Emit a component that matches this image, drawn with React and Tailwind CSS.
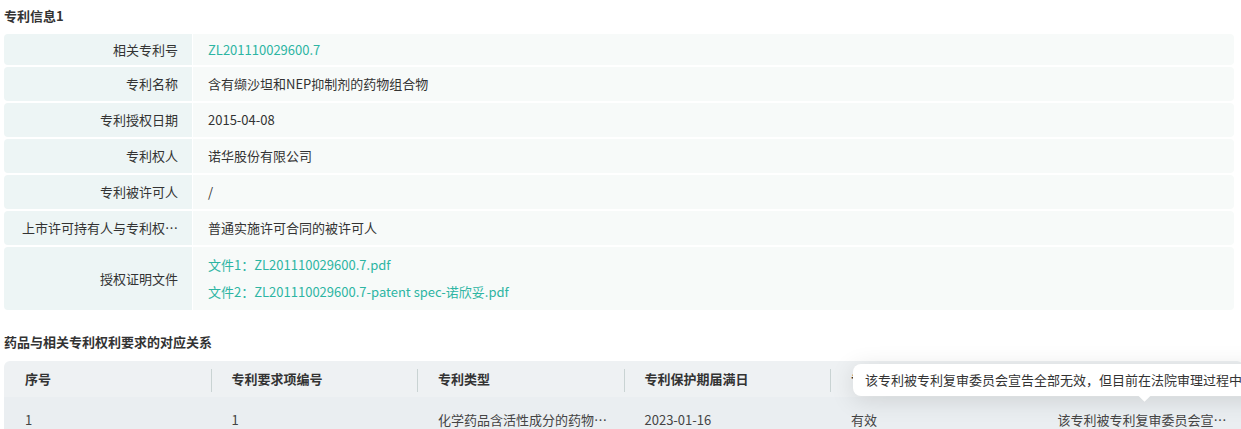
import React from "react";

const rows = [
  { label: "相关专利号", value: "ZL201110029600.7", link: true, h: "h-[31px]" },
  { label: "专利名称", value: "含有缬沙坦和NEP抑制剂的药物组合物", h: "h-[34px]" },
  { label: "专利授权日期", value: "2015-04-08", h: "h-[34px]" },
  { label: "专利权人", value: "诺华股份有限公司", h: "h-[34px]" },
  { label: "专利被许可人", value: "/", h: "h-[34px]" },
  { label: "上市许可持有人与专利权…", value: "普通实施许可合同的被许可人", h: "h-[34px]" },
];

const cols = ["序号", "专利要求项编号", "专利类型", "专利保护期届满日", "专利状态", "备注"];
const data = ["1", "1", "化学药品含活性成分的药物…", "2023-01-16", "有效", "该专利被专利复审委员会宣…"];

export default function App() {
  return (
    <div
      className="w-[1241px] h-[429px] overflow-hidden bg-white text-[13px] text-[#333]"
      style={{ fontFamily: '"Noto Sans CJK SC", "Noto Sans", sans-serif' }}
    >
      <div className="pl-[4px]">
        <div className="pt-[6px] pb-[8px] leading-[20px] font-bold text-[#333]">专利信息1</div>
        <div className="flex flex-col gap-[2px] mr-[7px]">
          {rows.map((r) => (
            <div key={r.label} className={`flex ${r.h} gap-[1px]`}>
              <div className="w-[188px] shrink-0 bg-[#edf5f5] rounded-l-[4px] flex items-center justify-end pr-[14px] text-[#333] whitespace-nowrap">
                {r.label}
              </div>
              <div
                className={`flex-1 bg-[#f7faf9] rounded-r-[4px] flex items-center pl-[15px] ${
                  r.link ? "text-[#2db5a3]" : "text-[#333]"
                }`}
              >
                {r.value}
              </div>
            </div>
          ))}
          <div className="flex h-[63px] gap-[1px]">
            <div className="w-[188px] shrink-0 bg-[#edf5f5] rounded-l-[4px] flex items-center justify-end pr-[14px]">
              授权证明文件
            </div>
            <div className="flex-1 bg-[#f7faf9] rounded-r-[4px] flex flex-col justify-center gap-[9px] pl-[15px] text-[#2db5a3] leading-[18px]">
              <div>文件1：ZL201110029600.7.pdf</div>
              <div>文件2：ZL201110029600.7-patent spec-诺欣妥.pdf</div>
            </div>
          </div>
        </div>

        <div className="pt-[22px] pb-[9px] leading-[20px] font-bold text-[#333]">药品与相关专利权利要求的对应关系</div>

        <div className="relative w-[1239px]">
          <div className="flex h-[36px] bg-[#eef1f3] rounded-t-[6px] items-center">
            {cols.map((c, i) => (
              <div key={c} className="flex-1 flex items-center h-full relative">
                {i > 0 && <div className="absolute left-0 top-[8px] h-[23px] w-[1px] bg-[#c9d3d3]" />}
                <span className="pl-[21px] font-bold text-[#333]">{c}</span>
              </div>
            ))}
          </div>
          <div className="flex h-[46px] bg-[#eaeef1] items-center">
            {data.map((d, i) => (
              <div key={i} className="flex-1 pl-[21px] text-[#444] whitespace-nowrap overflow-hidden">
                {d}
              </div>
            ))}
          </div>

          <div className="absolute left-[849px] top-[3px] h-[32px] w-[440px] bg-white rounded-[8px] shadow-[0_4px_24px_rgba(0,0,0,0.12)] flex items-center pl-[12px] text-[#333] whitespace-nowrap">
            该专利被专利复审委员会宣告全部无效，但目前在法院审理过程中
            <div className="absolute left-[287px] bottom-[-4px] w-[9px] h-[9px] bg-white rotate-45" />
          </div>
        </div>
      </div>
    </div>
  );
}
